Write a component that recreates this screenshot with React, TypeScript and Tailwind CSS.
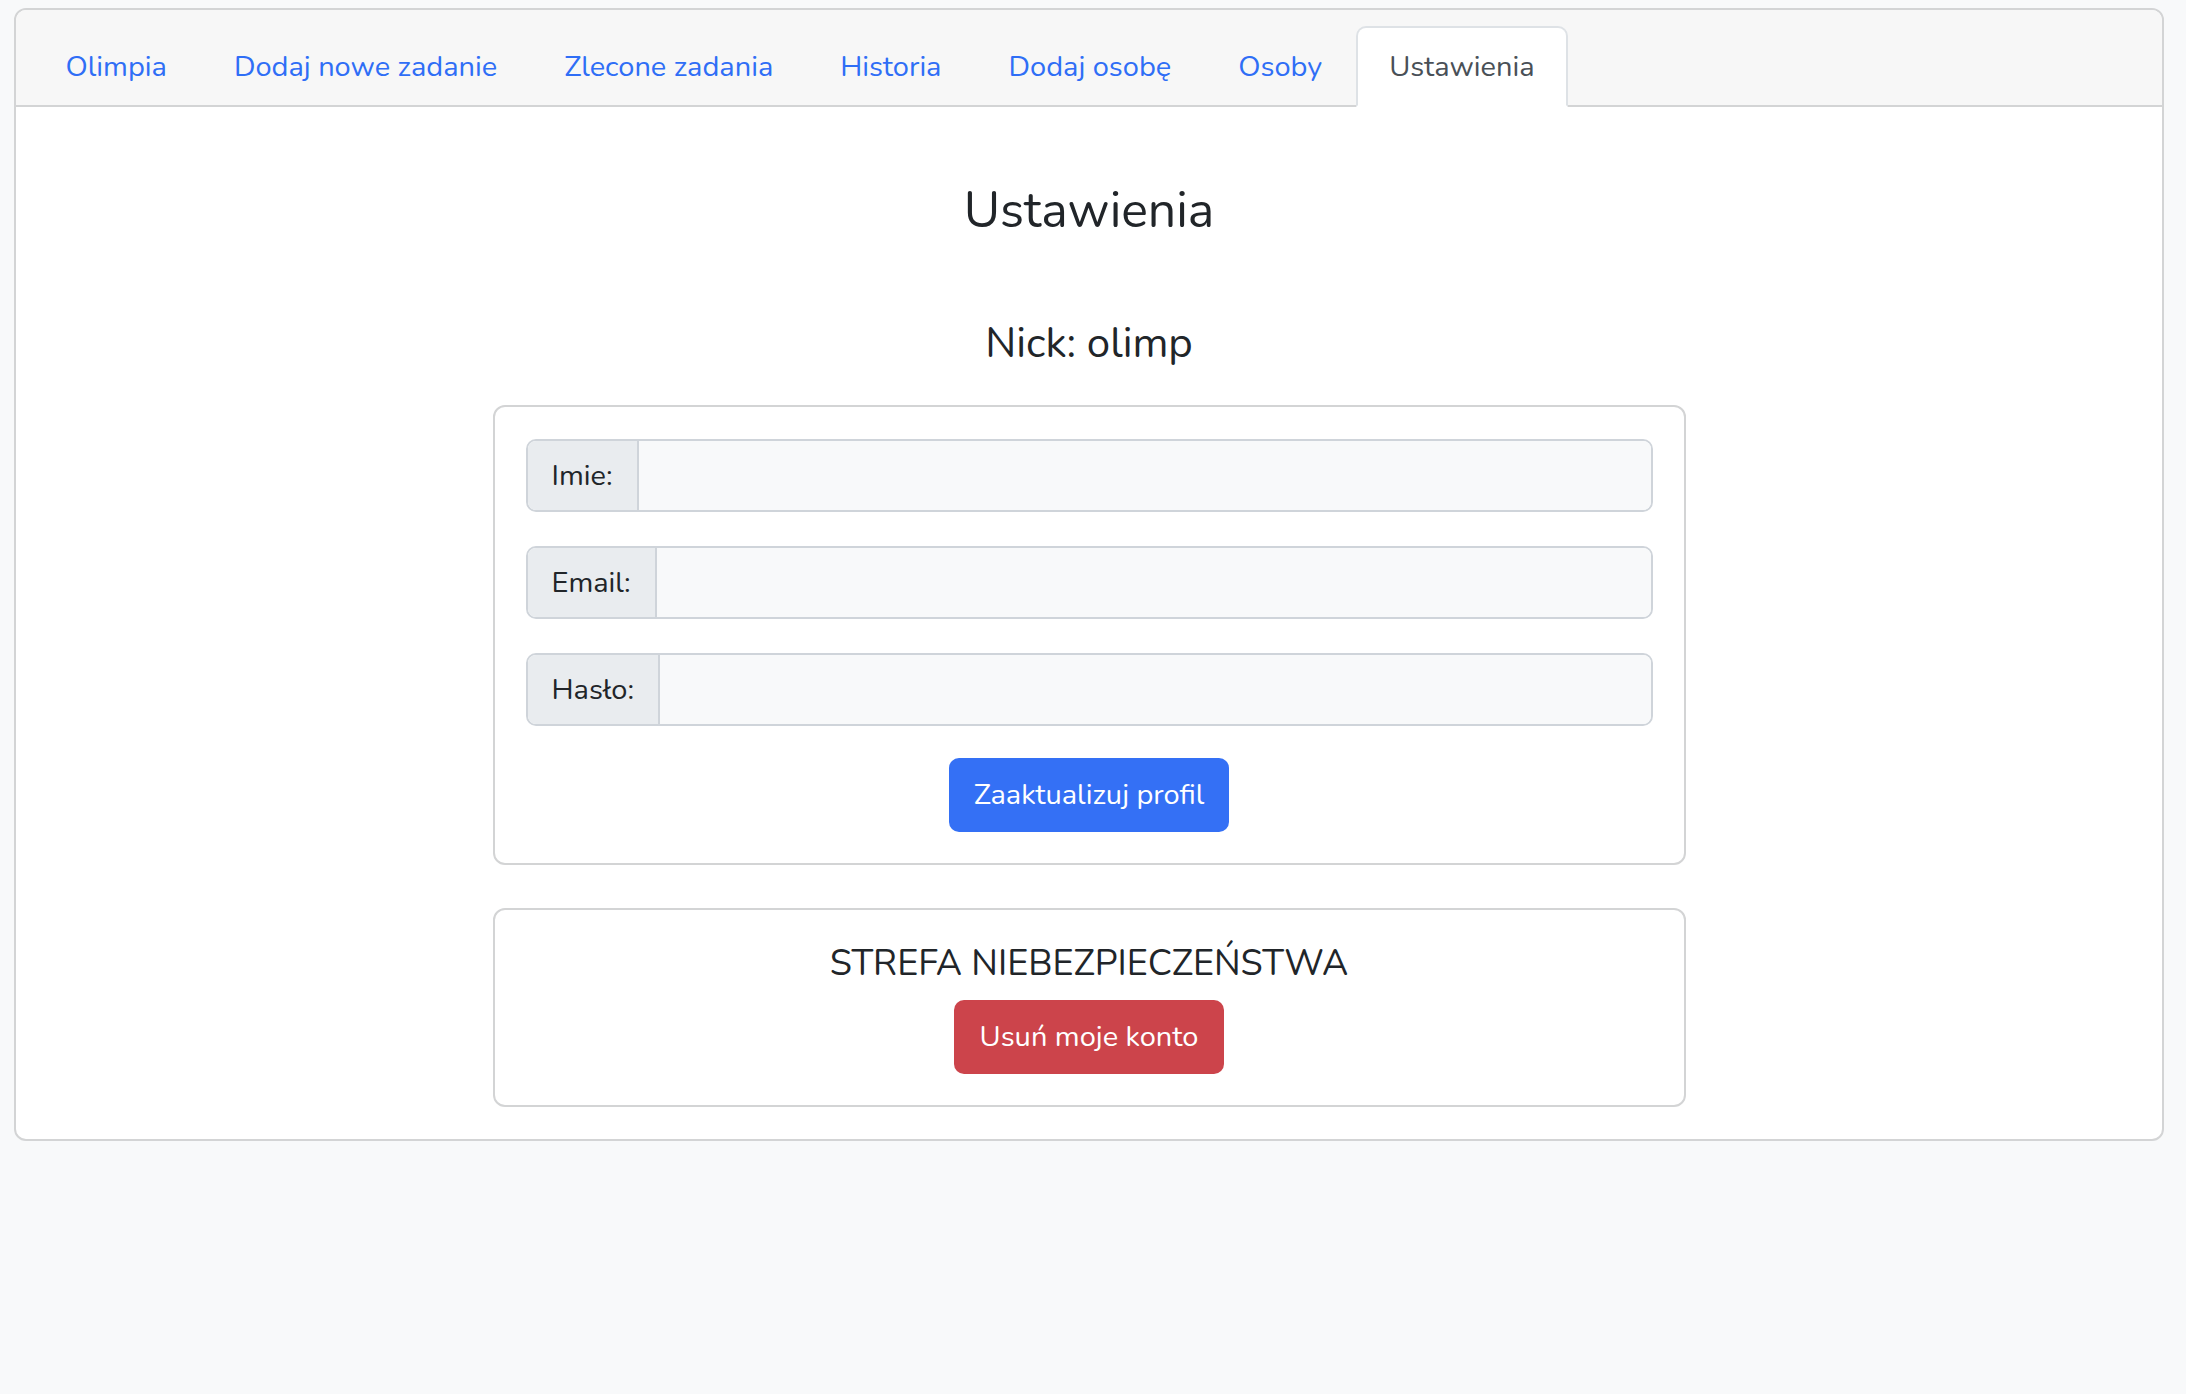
import React from 'react';

const tabs = ['Olimpia', 'Dodaj nowe zadanie', 'Zlecone zadania', 'Historia', 'Dodaj osobę', 'Osoby', 'Ustawienia'];

function Field({ label }: { label: string }) {
    return (
        <div className="flex h-[73px] rounded-[10px] border-2 border-[#cfd4da] overflow-hidden">
            <div className="flex items-center px-[24px] bg-[#e9ecef] border-r-2 border-[#cfd4da] text-[29px] text-[#212529]">
                {label}
            </div>
            <input className="flex-1 bg-[#f8f9fa] outline-none px-[24px] text-[29px]" type={label === 'Hasło:' ? 'password' : 'text'} />
        </div>
    );
}

export default function App() {
    const active = 'Ustawienia';

    return (
        <div
            className="min-h-screen bg-[#f8f9fa] pt-[8px] pl-[14px] pr-[22px] text-[#212529]"
            style={{ fontFamily: 'Nunito, Lato, "Open Sans", sans-serif' }}
        >
            <div className="rounded-[12px] border-2 border-[#d3d4d5] bg-white overflow-hidden">
                <div className="flex bg-[#f7f7f7] border-b-2 border-[#d3d4d5] pt-[16px] px-[16px]">
                    {tabs.map((tab) =>
                        tab === active ? (
                            <div
                                key={tab}
                                className="flex items-center h-[81px] -mb-[2px] px-[31.5px] border-2 border-[#dee2e6] border-b-white bg-white rounded-t-[10px] text-[29px] text-[#495057]"
                            >
                                {tab}
                            </div>
                        ) : (
                            <a
                                key={tab}
                                href="#"
                                className="flex items-center h-[81px] -mb-[2px] px-[31.5px] border-2 border-transparent text-[29px] text-[#2f6ef6]"
                            >
                                {tab}
                            </a>
                        )
                    )}
                </div>

                <div className="flex flex-col items-center pt-[74px] pb-[32px]">
                    <h2 className="text-[50px] leading-[60px]">Ustawienia</h2>
                    <h4 className="mt-[78px] text-[42px] leading-[50px]">Nick: olimp</h4>

                    <div className="mt-[36px] w-[1193px] rounded-[12px] border-2 border-[#d3d4d5] pt-[32px] px-[31px] pb-[31px] flex flex-col gap-[34px]">
                        <Field label="Imie:" />
                        <Field label="Email:" />
                        <Field label="Hasło:" />
                        <div className="flex justify-center -mt-[2px]">
                            <button className="h-[74px] px-[25px] rounded-[10px] bg-[#3470f5] text-white text-[29px]">
                                Zaaktualizuj profil
                            </button>
                        </div>
                    </div>

                    <div className="mt-[43px] w-[1193px] rounded-[12px] border-2 border-[#d3d4d5] pt-[32px] pb-[31px] flex flex-col items-center">
                        <h5 className="text-[36px] leading-[43px]">STREFA NIEBEZPIECZEŃSTWA</h5>
                        <button className="mt-[15px] h-[74px] px-[26px] rounded-[10px] bg-[#cc444b] text-white text-[29px]">
                            Usuń moje konto
                        </button>
                    </div>
                </div>
            </div>
        </div>
    );
}
